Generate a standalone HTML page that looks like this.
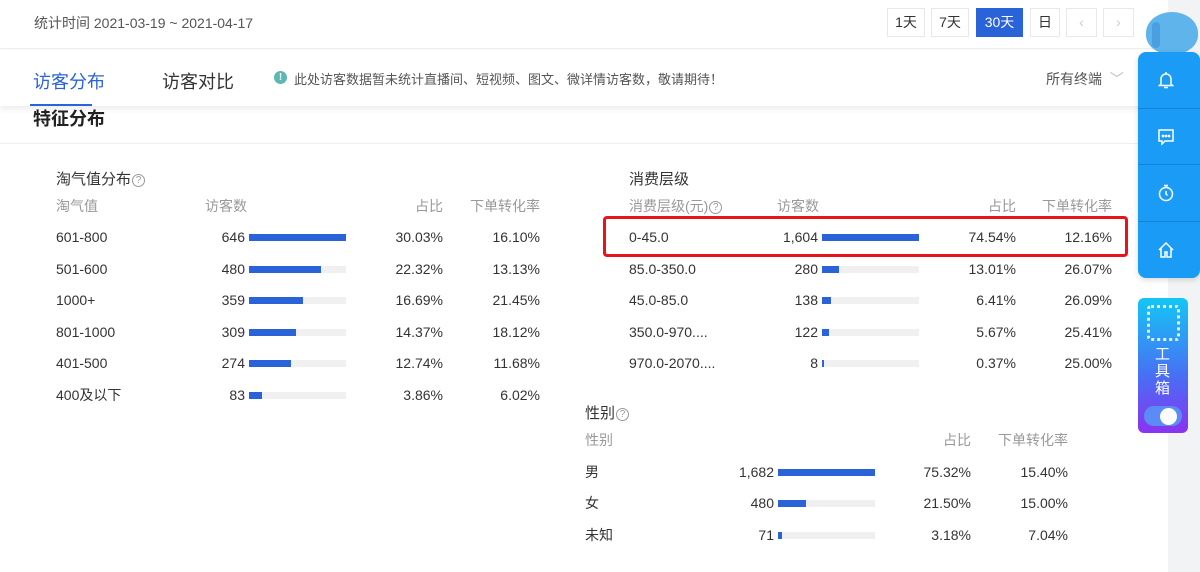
<!DOCTYPE html>
<html><head><meta charset="utf-8">
<style>
*{margin:0;padding:0;box-sizing:border-box}
body{width:1200px;height:572px;overflow:hidden;background:#fff;font-family:"Liberation Sans","Noto Sans CJK SC",sans-serif;color:#333;position:relative}
.a{position:absolute;white-space:nowrap}
.t{position:absolute;width:490px}
.t div{position:absolute;font-size:14px;line-height:20px;white-space:nowrap}
.h{color:#999;font-size:13px}
.n{width:80px;text-align:right}
.p{width:80px;text-align:right}
.bt{height:7px;width:97px;background:#f0f0f0;margin-top:0}
.bf{height:7px;background:#2a62d8}
.btn{position:absolute;top:8px;height:29px;border:1px solid #e8e8e8;font-size:14px;line-height:27px;text-align:center;color:#333;background:#fff}
.q{display:inline-block;width:13px;height:13px;border:1px solid #999;border-radius:50%;font-size:10px;line-height:11px;text-align:center;color:#999;vertical-align:1px;margin-left:1px}
</style></head><body>
<div class="a" style="left:1168px;top:0;width:32px;height:572px;background:#f2f3f5"></div>
<div class="a" style="left:0;top:0;width:1168px;height:49px;background:#fff;border-bottom:1px solid #eee"></div>
<div class="a" style="left:34px;top:13px;font-size:14px;color:#555">统计时间 2021-03-19 ~ 2021-04-17</div>
<div class="btn" style="left:887px;width:38px">1天</div>
<div class="btn" style="left:931px;width:38px">7天</div>
<div class="btn" style="left:976px;width:47px;background:#2a62d8;color:#fff;border-color:#2a62d8">30天</div>
<div class="btn" style="left:1030px;width:30px">日</div>
<div class="btn" style="left:1066px;width:31px;color:#ccc">‹</div>
<div class="btn" style="left:1103px;width:31px;color:#ccc">›</div>

<div class="a" style="left:0;top:50px;width:1168px;height:56px;background:#fff;box-shadow:0 3px 6px rgba(0,0,0,.08)"></div>
<div class="a" style="left:33px;top:68px;font-size:18px;color:#2a62d8">访客分布</div>
<div class="a" style="left:30px;top:104px;width:62px;height:2px;background:#2a62d8"></div>
<div class="a" style="left:162px;top:68px;font-size:18px;color:#333">访客对比</div>
<div class="a" style="left:274px;top:71px;width:13px;height:13px;border-radius:50%;background:#5cb8b2;color:#fff;font-size:10px;line-height:13px;text-align:center;font-weight:bold">!</div>
<div class="a" style="left:294px;top:69px;font-size:13px;color:#555">此处访客数据暂未统计直播间、短视频、图文、微详情访客数，敬请期待！</div>
<div class="a" style="left:1046px;top:69px;font-size:14px;color:#555">所有终端 <span style="color:#bbb;margin-left:4px">﹀</span></div>
<div class="a" style="left:33px;top:105px;font-size:18px;font-weight:bold;color:#222">特征分布</div>
<div class="a" style="left:0;top:143px;width:1168px;height:1px;background:#eee"></div>

<div class="a" style="left:56px;top:168px;font-size:15px;color:#333">淘气值分布<span class="q">?</span></div>
<div class="a" style="left:629px;top:168px;font-size:15px;color:#333">消费层级</div>
<div class="a" style="left:585px;top:402px;font-size:15px;color:#333">性别<span class="q">?</span></div>

<div class="t" style="left:56px;top:196px">
<div class="h" style="left:0;top:0">淘气值</div><div class="h" style="left:149px;top:0">访客数</div><div class="h p" style="left:307px;top:0">占比</div><div class="h p" style="left:404px;top:0">下单转化率</div>
</div>
<div class="t" style="left:629px;top:196px">
<div class="h" style="left:0;top:0">消费层级(元)<span class="q">?</span></div><div class="h" style="left:148px;top:0">访客数</div><div class="h p" style="left:307px;top:0">占比</div><div class="h p" style="left:403px;top:0">下单转化率</div>
</div>
<div class="t" style="left:585px;top:430px">
<div class="h" style="left:0;top:0">性别</div><div class="h p" style="left:306px;top:0">占比</div><div class="h p" style="left:403px;top:0">下单转化率</div>
</div>

<div class="a" style="left:603px;top:216px;width:525px;height:41px;border:3px solid #e8141c;border-radius:4px"></div>

<div class="t" style="left:56px;top:227px">
<div style="left:0;top:0">601-800</div><div class="n" style="left:109px;top:0">646</div><div class="bt" style="left:193px;top:7px"><div class="bf" style="position:static;width:97px"></div></div><div class="p" style="left:307px;top:0">30.03%</div><div class="p" style="left:404px;top:0">16.10%</div>
<div style="left:0;top:32px">501-600</div><div class="n" style="left:109px;top:32px">480</div><div class="bt" style="left:193px;top:39px"><div class="bf" style="position:static;width:72px"></div></div><div class="p" style="left:307px;top:32px">22.32%</div><div class="p" style="left:404px;top:32px">13.13%</div>
<div style="left:0;top:63px">1000+</div><div class="n" style="left:109px;top:63px">359</div><div class="bt" style="left:193px;top:70px"><div class="bf" style="position:static;width:54px"></div></div><div class="p" style="left:307px;top:63px">16.69%</div><div class="p" style="left:404px;top:63px">21.45%</div>
<div style="left:0;top:95px">801-1000</div><div class="n" style="left:109px;top:95px">309</div><div class="bt" style="left:193px;top:102px"><div class="bf" style="position:static;width:47px"></div></div><div class="p" style="left:307px;top:95px">14.37%</div><div class="p" style="left:404px;top:95px">18.12%</div>
<div style="left:0;top:126px">401-500</div><div class="n" style="left:109px;top:126px">274</div><div class="bt" style="left:193px;top:133px"><div class="bf" style="position:static;width:42px"></div></div><div class="p" style="left:307px;top:126px">12.74%</div><div class="p" style="left:404px;top:126px">11.68%</div>
<div style="left:0;top:158px">400及以下</div><div class="n" style="left:109px;top:158px">83</div><div class="bt" style="left:193px;top:165px"><div class="bf" style="position:static;width:13px"></div></div><div class="p" style="left:307px;top:158px">3.86%</div><div class="p" style="left:404px;top:158px">6.02%</div>
</div>

<div class="t" style="left:629px;top:227px">
<div style="left:0;top:0">0-45.0</div><div class="n" style="left:109px;top:0">1,604</div><div class="bt" style="left:193px;top:7px"><div class="bf" style="position:static;width:97px"></div></div><div class="p" style="left:307px;top:0">74.54%</div><div class="p" style="left:403px;top:0">12.16%</div>
<div style="left:0;top:32px">85.0-350.0</div><div class="n" style="left:109px;top:32px">280</div><div class="bt" style="left:193px;top:39px"><div class="bf" style="position:static;width:17px"></div></div><div class="p" style="left:307px;top:32px">13.01%</div><div class="p" style="left:403px;top:32px">26.07%</div>
<div style="left:0;top:63px">45.0-85.0</div><div class="n" style="left:109px;top:63px">138</div><div class="bt" style="left:193px;top:70px"><div class="bf" style="position:static;width:9px"></div></div><div class="p" style="left:307px;top:63px">6.41%</div><div class="p" style="left:403px;top:63px">26.09%</div>
<div style="left:0;top:95px">350.0-970....</div><div class="n" style="left:109px;top:95px">122</div><div class="bt" style="left:193px;top:102px"><div class="bf" style="position:static;width:7px"></div></div><div class="p" style="left:307px;top:95px">5.67%</div><div class="p" style="left:403px;top:95px">25.41%</div>
<div style="left:0;top:126px">970.0-2070....</div><div class="n" style="left:109px;top:126px">8</div><div class="bt" style="left:193px;top:133px"><div class="bf" style="position:static;width:2px"></div></div><div class="p" style="left:307px;top:126px">0.37%</div><div class="p" style="left:403px;top:126px">25.00%</div>
</div>

<div class="t" style="left:585px;top:462px">
<div style="left:0;top:0">男</div><div class="n" style="left:109px;top:0">1,682</div><div class="bt" style="left:193px;top:7px"><div class="bf" style="position:static;width:97px"></div></div><div class="p" style="left:306px;top:0">75.32%</div><div class="p" style="left:403px;top:0">15.40%</div>
<div style="left:0;top:31px">女</div><div class="n" style="left:109px;top:31px">480</div><div class="bt" style="left:193px;top:38px"><div class="bf" style="position:static;width:28px"></div></div><div class="p" style="left:306px;top:31px">21.50%</div><div class="p" style="left:403px;top:31px">15.00%</div>
<div style="left:0;top:63px">未知</div><div class="n" style="left:109px;top:63px">71</div><div class="bt" style="left:193px;top:70px"><div class="bf" style="position:static;width:4px"></div></div><div class="p" style="left:306px;top:63px">3.18%</div><div class="p" style="left:403px;top:63px">7.04%</div>
</div>

<!-- sidebar -->
<div class="a" style="left:1146px;top:12px;width:52px;height:42px;background:#5fb4ec;border-radius:50% 50% 45% 45%"></div>
<div class="a" style="left:1152px;top:22px;width:8px;height:26px;background:#4a9fe0;border-radius:4px"></div>
<div class="a" style="left:1138px;top:52px;width:62px;height:226px;background:#1a9cf6;border-radius:8px;box-shadow:0 2px 6px rgba(0,0,0,.15)"></div>
<div class="a" style="left:1138px;top:108px;width:62px;height:1px;background:#1583d6"></div>
<div class="a" style="left:1138px;top:164px;width:62px;height:1px;background:#1583d6"></div>
<div class="a" style="left:1138px;top:221px;width:62px;height:1px;background:#1583d6"></div>
<svg class="a" style="left:1156px;top:70px" width="20" height="20" viewBox="0 0 20 20" fill="none" stroke="#fff" stroke-width="1.5"><path d="M5 14V9a5 5 0 0 1 10 0v5l1.5 1.5h-13zM8 17.5h4M10 2v2"/></svg>
<svg class="a" style="left:1156px;top:127px" width="20" height="20" viewBox="0 0 20 20" fill="none" stroke="#fff" stroke-width="1.5"><path d="M3 3h14v11H9l-3 3v-3H3z"/><circle cx="7" cy="9" r=".6" fill="#fff"/><circle cx="10" cy="9" r=".6" fill="#fff"/><circle cx="13" cy="9" r=".6" fill="#fff"/></svg>
<svg class="a" style="left:1156px;top:183px" width="20" height="20" viewBox="0 0 20 20" fill="none" stroke="#fff" stroke-width="1.5"><circle cx="10" cy="11" r="6.5"/><path d="M8 2.5h4M10 2.5v2M10 8v3l1.5 1.5"/></svg>
<svg class="a" style="left:1156px;top:240px" width="20" height="20" viewBox="0 0 20 20" fill="none" stroke="#fff" stroke-width="1.5"><path d="M3 10l7-7 7 7M5 8v9h4v-5h2v5h4V8"/></svg>
<div class="a" style="left:1138px;top:298px;width:50px;height:135px;border-radius:6px;background:linear-gradient(#14c6f4,#4a6cf4 60%,#8a33f0)"></div>
<div class="a" style="left:1147px;top:305px;width:33px;height:36px;border:3px dotted #fff;border-radius:4px;opacity:.85"></div>
<div class="a" style="left:1155px;top:346px;font-size:15px;line-height:17px;color:#fff;width:16px;white-space:normal">工具箱</div>
<div class="a" style="left:1144px;top:406px;width:38px;height:20px;border-radius:10px;background:#5b8cf5"></div>
<div class="a" style="left:1160px;top:408px;width:17px;height:17px;border-radius:50%;background:#fff"></div>
</body></html>
